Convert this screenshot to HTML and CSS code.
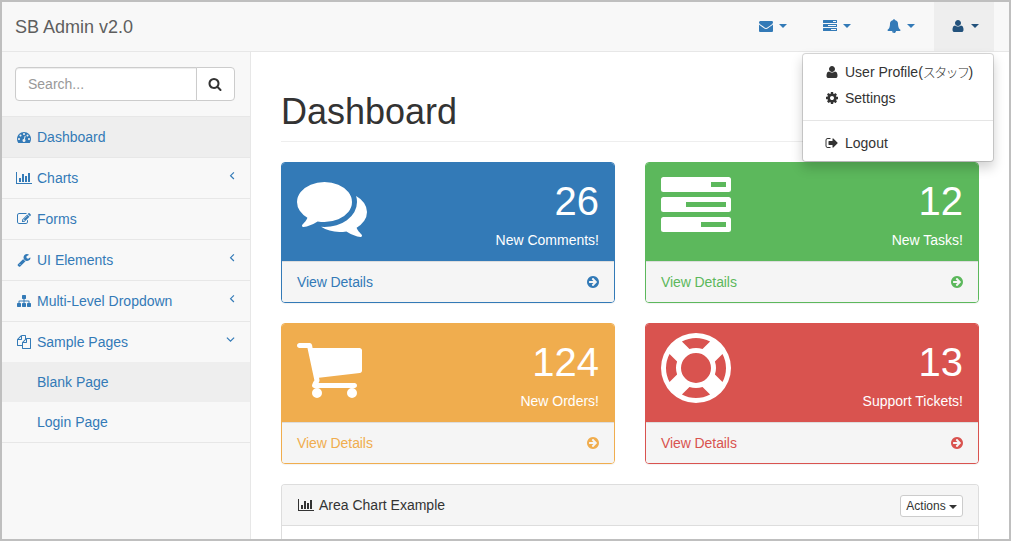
FILE: index.html
```
<!DOCTYPE html>
<html lang="en">
<head>
    <meta charset="UTF-8">
    <meta name="viewport" content="width=device-width, initial-scale=1.0">
    <title>SB Admin v2.0</title>
    <link rel="stylesheet" href="styles.css">
</head>
<body>
    <!-- icon shapes, used below with <use> -->
    <svg class="sprite">
        <symbol id="envelope" viewBox="0 0 1792 1792"><path d="M1792 710v794q0 66-47 113t-113 47h-1472q-66 0-113-47t-47-113v-794q44 49 101 87 362 246 497 345 57 42 92.5 65.5t94.5 48 110 24.5h2q51 0 110-24.5t94.5-48 92.5-65.5q170-123 498-345 57-39 100-87zm0-294q0 79-49 151t-122 123q-376 261-468 325-10 7-42.5 31t-54 38.5-52 32.5-57.5 27-50 9h-2q-23 0-50-9t-57.5-27-52-32.5-54-38.5-42.5-31q-91-64-262-182.5t-205-142.5q-62-42-117-115.5t-55-136.5q0-78 41.5-130t118.5-52h1472q65 0 112.5 47t47.5 113z"/></symbol>
        <symbol id="tasks" viewBox="0 0 1792 1792"><path fill-rule="evenodd" d="M64 128h1664q64 0 64 64v256q0 64-64 64h-1664q-64 0-64-64v-256q0-64 64-64zM1280 256v128h384v-128zM64 640h1664q64 0 64 64v256q0 64-64 64h-1664q-64 0-64-64v-256q0-64 64-64zM640 768v128h1024v-128zM64 1152h1664q64 0 64 64v256q0 64-64 64h-1664q-64 0-64-64v-256q0-64 64-64zM1024 1280v128h640v-128z"/></symbol>
        <symbol id="bell" viewBox="0 0 1792 1792"><path d="M912 1696q0-16-16-16-59 0-101.5-42.5t-42.5-101.5q0-16-16-16t-16 16q0 73 51.5 124.5t124.5 51.5q16 0 16-16zm816-288q0 52-38 90t-90 38h-448q0 106-75 181t-181 75-181-75-75-181h-448q-52 0-90-38t-38-90q50-42 91-88t85-119.5 74.5-158.5 50-206 19.5-260q0-152 117-282.5t307-158.5q-8-19-8-39 0-40 28-68t68-28 68 28 28 68q0 20-8 39 190 28 307 158.5t117 282.5q0 139 19.5 260t50 206 74.5 158.5 85 119.5 91 88z"/></symbol>
        <symbol id="user" viewBox="0 0 1792 1792"><path transform="translate(192 1536) scale(1 -1)" d="M1408 131q0 -120 -73 -189.5t-194 -69.5h-874q-121 0 -194 69.5t-73 189.5q0 53 3.5 103.5t14 109t26.5 108.5t43 97.5t62 81t85.5 53.5t111.5 20q9 0 42 -21.5t74.5 -48t108 -48t133.5 -21.5t133.5 21.5t108 48t74.5 48t42 21.5q61 0 111.5 -20t85.5 -53.5t62 -81t43 -97.5t26.5 -108.5t14 -109t3.5 -103.5zM1088 1024q0 -159 -112.5 -271.5t-271.5 -112.5t-271.5 112.5t-112.5 271.5t112.5 271.5t271.5 112.5t271.5 -112.5t112.5 -271.5z"/></symbol>
        <symbol id="cog" viewBox="0 0 1792 1792"><path d="M1152 896q0-106-75-181t-181-75-181 75-75 181 75 181 181 75 181-75 75-181zm512-109v222q0 12-8 23t-20 13l-185 28q-19 54-39 91 35 50 107 138 10 12 10 25t-9 23q-27 37-99 108t-94 71q-12 0-26-9l-138-108q-44 23-91 38-16 136-29 186-7 28-36 28h-222q-14 0-24.5-8.5t-11.5-21.5l-28-184q-49-16-90-37l-141 107q-10 9-25 9-14 0-25-11-126-114-165-168-7-10-7-23 0-12 8-23 15-21 51-66.5t54-70.5q-27-50-41-99l-183-27q-13-2-21-12.5t-8-23.5v-222q0-12 8-23t19-13l186-28q14-46 39-92-40-57-107-138-10-12-10-24 0-10 9-23 26-36 98.5-107.5t94.5-71.5q13 0 26 10l138 107q44-23 91-38 16-136 29-186 7-28 36-28h222q14 0 24.5 8.5t11.5 21.5l28 184q49 16 90 37l142-107q9-9 24-9 13 0 25 10 129 119 165 170 7 8 7 22 0 12-8 23-15 21-51 66.5t-54 70.5q26 50 41 98l183 28q13 2 21 12.5t8 23.5z"/></symbol>
        <symbol id="sign-out" viewBox="0 0 1792 1792"><path d="M704 1440q0 4 1 20t.5 26.5-3 23.5-10 19.5-20.5 6.5h-320q-119 0-203.5-84.5t-84.5-203.5v-704q0-119 84.5-203.5t203.5-84.5h320q13 0 22.5 9.5t9.5 22.5q0 4 1 20t.5 26.5-3 23.5-10 19.5-20.5 6.5h-320q-66 0-113 47t-47 113v704q0 66 47 113t113 47h312l11.5 1 11.5 3 8 5.5 7 9 2 13.5zm928-544q0 26-19 45l-544 544q-19 19-45 19t-45-19-19-45v-288h-448q-26 0-45-19t-19-45v-384q0-26 19-45t45-19h448v-288q0-26 19-45t45-19 45 19l544 544q19 19 19 45z"/></symbol>
        <symbol id="search" viewBox="0 0 1792 1792"><path d="M1216 832q0-185-131.5-316.5t-316.5-131.5-316.5 131.5-131.5 316.5 131.5 316.5 316.5 131.5 316.5-131.5 131.5-316.5zm512 832q0 52-38 90t-90 38q-54 0-90-38l-343-342q-179 124-399 124-143 0-273.5-55.5t-225-150-150-225-55.5-273.5 55.5-273.5 150-225 225-150 273.5-55.5 273.5 55.5 225 150 150 225 55.5 273.5q0 220-124 399l343 343q37 37 37 90z"/></symbol>
        <symbol id="dashboard" viewBox="0 0 1792 1792"><path d="M384 1152q0-53-37.5-90.5t-90.5-37.5-90.5 37.5-37.5 90.5 37.5 90.5 90.5 37.5 90.5-37.5 37.5-90.5zm192-448q0-53-37.5-90.5t-90.5-37.5-90.5 37.5-37.5 90.5 37.5 90.5 90.5 37.5 90.5-37.5 37.5-90.5zm428 481l101-382q6-26-7.5-48.5t-38.5-29.5-48 6.5-30 39.5l-101 382q-60 5-107 43.5t-63 98.5q-20 77 20 146t117 89 146-20 89-117q16-60-6-117t-72-91zm660-33q0-53-37.5-90.5t-90.5-37.5-90.5 37.5-37.5 90.5 37.5 90.5 90.5 37.5 90.5-37.5 37.5-90.5zm-640-640q0-53-37.5-90.5t-90.5-37.5-90.5 37.5-37.5 90.5 37.5 90.5 90.5 37.5 90.5-37.5 37.5-90.5zm448 192q0-53-37.5-90.5t-90.5-37.5-90.5 37.5-37.5 90.5 37.5 90.5 90.5 37.5 90.5-37.5 37.5-90.5zm320 448q0 261-141 483-19 29-54 29h-1402q-35 0-54-29-141-221-141-483 0-182 71-348t191-286 286-191 348-71 348 71 286 191 191 286 71 348z"/></symbol>
        <symbol id="chart" viewBox="0 -128 2048 1792"><path d="M640 768v512h-256v-512h256zm384-512v1024h-256v-1024h256zm1024 1152v128h-2048v-1536h128v1408h1920zm-640-896v768h-256v-768h256zm384-384v1152h-256v-1152h256z"/></symbol>
        <symbol id="edit" viewBox="0 0 1792 1792"><path d="M888 1184l116-116-152-152-116 116v56h96v96h56zm440-720q-16-16-33 1l-350 350q-17 17-1 33t33-1l350-350q17-17 1-33zm80 594v190q0 119-84.5 203.5t-203.5 84.5h-832q-119 0-203.5-84.5t-84.5-203.5v-832q0-119 84.5-203.5t203.5-84.5h832q63 0 117 25 15 7 18 23 3 17-9 29l-49 49q-14 14-32 8-23-6-45-6h-832q-66 0-113 47t-47 113v832q0 66 47 113t113 47h832q66 0 113-47t47-113v-126q0-13 9-22l64-64q15-15 35-7t20 29zm-96-738l288 288-672 672h-288v-288zm444 132l-92 92-288-288 92-92q28-28 68-28t68 28l152 152q28 28 28 68t-28 68z"/></symbol>
        <symbol id="wrench" viewBox="0 0 1792 1792"><path d="M448 1472q0-26-19-45t-45-19-45 19-19 45 19 45 45 19 45-19 19-45zm644-420l-682 682q-37 37-90 37-52 0-91-37l-106-108q-38-36-38-90 0-53 38-91l681-681q39 98 114.5 173.5t173.5 114.5zm634-435q0 39-23 106-47 134-164.5 217.5t-258.5 83.5q-185 0-316.5-131.5t-131.5-316.5 131.5-316.5 316.5-131.5q58 0 121.5 16.5t107.5 46.5q16 11 16 28t-16 28l-293 169v224l193 107q5-3 79-48.5t135.5-81 70.5-35.5q15 0 23.5 10t8.5 25z"/></symbol>
        <symbol id="sitemap" viewBox="0 0 1792 1792"><path d="M1792 1248v320q0 40-28 68t-68 28h-320q-40 0-68-28t-28-68v-320q0-40 28-68t68-28h96v-192h-512v192h96q40 0 68 28t28 68v320q0 40-28 68t-68 28h-320q-40 0-68-28t-28-68v-320q0-40 28-68t68-28h96v-192h-512v192h96q40 0 68 28t28 68v320q0 40-28 68t-68 28h-320q-40 0-68-28t-28-68v-320q0-40 28-68t68-28h96v-192q0-52 38-90t90-38h512v-192h-96q-40 0-68-28t-28-68v-320q0-40 28-68t68-28h320q40 0 68 28t28 68v320q0 40-28 68t-68 28h-96v192h512q52 0 90 38t38 90v192h96q40 0 68 28t28 68z"/></symbol>
        <symbol id="files" viewBox="0 0 1792 1792"><path d="M1696 384q40 0 68 28t28 68v1216q0 40-28 68t-68 28h-960q-40 0-68-28t-28-68v-288h-544q-40 0-68-28t-28-68v-672q0-40 20-88t48-76l408-408q28-28 76-48t88-20h416q40 0 68 28t28 68v328q68-40 128-40h416zm-544 213l-299 299h299v-299zm-640-384l-299 299h299v-299zm196 647l316-316v-416h-384v416q0 40-28 68t-68 28h-416v640h512v-256q0-40 20-88t48-76zm956 804v-1152h-384v416q0 40-28 68t-68 28h-416v640h896z"/></symbol>
        <symbol id="arrow-circle" viewBox="0 0 1792 1792"><path d="M1413 896q0-27-18-45l-91-91-362-362q-18-18-45-18t-45 18l-91 91q-18 18-18 45t18 45l189 189h-502q-26 0-45 19t-19 45v128q0 26 19 45t45 19h502l-189 189q-19 19-19 45t19 45l91 91q18 18 45 18t45-18l362-362 91-91q18-18 18-45zm251 0q0 209-103 385.5t-279.5 279.5-385.5 103-385.5-103-279.5-279.5-103-385.5 103-385.5 279.5-279.5 385.5-103 385.5 103 279.5 279.5 103 385.5z"/></symbol>
        <symbol id="comments" viewBox="0 0 1792 1792"><path d="M1408 768q0 139-94 257t-256.5 186.5-353.5 68.5q-86 0-176-16-124 88-278 128-36 9-86 16h-3q-11 0-20.5-8t-11.5-21q-1-3-1-6.5t.5-6.5 2-6l2.5-5t3.5-5.5 4-5 4.5-5 4-4.5q5-6 23-25t26-29.5 22.5-29 25-38.5 20.5-44q-124-72-195-177t-71-224q0-139 94-257t256.5-186.5 353.5-68.5 353.5 68.5 256.5 186.5 94 257zm384 256q0 120-71 224.5t-195 176.5q10 24 20.5 44t25 38.5 22.5 29 26 29.5 23 25q1 1 4 4.5t4.5 5 4 5 3.5 5.5l2.5 5t2 6 .5 6.5-1 6.5q-3 14-13 22t-22 7q-50-7-86-16-154-40-278-128-90 16-176 16-271 0-472-132 58 4 88 4 161 0 309-45t264-129q125-92 192-212t67-254q0-77-23-152 129 71 204 178t75 230z"/></symbol>
        <symbol id="cart" viewBox="64 0 1792 1792"><path d="M704 1536q0 52-38 90t-90 38-90-38-38-90 38-90 90-38 90 38 38 90zm896 0q0 52-38 90t-90 38-90-38-38-90 38-90 90-38 90 38 38 90zm128-1088v512q0 24-16.5 42.5t-40.5 21.5l-1044 122q13 60 13 70 0 16-24 64h920q26 0 45 19t19 45-19 45-45 19h-1024q-26 0-45-19t-19-45q0-11 8-31.5t16-36 21.5-40 15.5-29.5l-177-823h-204q-26 0-45-19t-19-45 19-45 45-19h256q16 0 28.5 6.5t19.5 15.5 13 24.5 8 26 5.5 29.5 4.5 26h1201q26 0 45 19t19 45z"/></symbol>
        <symbol id="support" viewBox="0 0 1792 1792"><path d="M896 0q182 0 348 71t286 191 191 286 71 348-71 348-191 286-286 191-348 71-348-71-286-191-191-286-71-348 71-348 191-286 286-191 348-71zm0 128q-190 0-361 90l194 194q82-28 167-28t167 28l194-194q-171-90-361-90zm-678 1129l194-194q-28-82-28-167t28-167l-194-194q-90 171-90 361t90 361zm678 407q190 0 361-90l-194-194q-82 28-167 28t-167-28l-194 194q171 90 361 90zm0-384q159 0 271.5-112.5t112.5-271.5-112.5-271.5-271.5-112.5-271.5 112.5-112.5 271.5 112.5 271.5 271.5 112.5zm484-217l194 194q90-171 90-361t-90-361l-194 194q28 82 28 167t-28 167z"/></symbol>
        <symbol id="angle-left" viewBox="0 0 6 14"><path class="line" d="M4.9 2.4L1.6 5.7L4.9 9"/></symbol>
        <symbol id="angle-down" viewBox="0 0 9 14"><path class="line" d="M0.9 3.6L4.5 7.2L8.1 3.6"/></symbol>
    </svg>

    <nav class="navbar">
        <a class="brand" href="#">SB Admin v2.0</a>
        <ul class="top-links">
            <li><a href="#"><svg class="icon"><use href="#envelope"/></svg><b class="caret"></b></a></li>
            <li><a href="#"><svg class="icon"><use href="#tasks"/></svg><b class="caret"></b></a></li>
            <li><a href="#"><svg class="icon"><use href="#bell"/></svg><b class="caret"></b></a></li>
            <li class="open">
                <a href="#"><svg class="icon"><use href="#user"/></svg><b class="caret"></b></a>
                <ul class="dropdown">
                    <li><a href="#"><svg class="icon"><use href="#user"/></svg><span>User Profile(<span class="kana">スタッフ</span>)</span></a></li>
                    <li><a href="#"><svg class="icon"><use href="#cog"/></svg>Settings</a></li>
                    <li class="divider"></li>
                    <li><a href="#"><svg class="icon"><use href="#sign-out"/></svg>Logout</a></li>
                </ul>
            </li>
        </ul>
    </nav>

    <div class="wrapper">
        <aside class="sidebar">
            <div class="search">
                <input type="text" placeholder="Search...">
                <button><svg class="icon"><use href="#search"/></svg></button>
            </div>
            <ul class="menu">
                <li><a class="active" href="#"><svg class="icon"><use href="#dashboard"/></svg>Dashboard</a></li>
                <li><a href="#"><svg class="icon icon-chart"><use href="#chart"/></svg>Charts<svg class="arrow"><use href="#angle-left"/></svg></a></li>
                <li><a href="#"><svg class="icon"><use href="#edit"/></svg>Forms</a></li>
                <li><a href="#"><svg class="icon"><use href="#wrench"/></svg>UI Elements<svg class="arrow"><use href="#angle-left"/></svg></a></li>
                <li><a href="#"><svg class="icon"><use href="#sitemap"/></svg>Multi-Level Dropdown<svg class="arrow"><use href="#angle-left"/></svg></a></li>
                <li>
                    <a href="#"><svg class="icon"><use href="#files"/></svg>Sample Pages<svg class="arrow arrow-down"><use href="#angle-down"/></svg></a>
                    <ul class="submenu">
                        <li><a class="active" href="#">Blank Page</a></li>
                        <li><a href="#">Login Page</a></li>
                    </ul>
                </li>
            </ul>
        </aside>

        <main class="page">
            <h1>Dashboard</h1>
            <div class="cards">
                <div class="card blue">
                    <div class="card-top">
                        <svg class="big-icon"><use href="#comments"/></svg>
                        <div class="count">
                            <div class="huge">26</div>
                            <div>New Comments!</div>
                        </div>
                    </div>
                    <a class="card-footer" href="#">View Details<svg class="icon"><use href="#arrow-circle"/></svg></a>
                </div>
                <div class="card green">
                    <div class="card-top">
                        <svg class="big-icon"><use href="#tasks"/></svg>
                        <div class="count">
                            <div class="huge">12</div>
                            <div>New Tasks!</div>
                        </div>
                    </div>
                    <a class="card-footer" href="#">View Details<svg class="icon"><use href="#arrow-circle"/></svg></a>
                </div>
                <div class="card yellow">
                    <div class="card-top">
                        <svg class="big-icon"><use href="#cart"/></svg>
                        <div class="count">
                            <div class="huge">124</div>
                            <div>New Orders!</div>
                        </div>
                    </div>
                    <a class="card-footer" href="#">View Details<svg class="icon"><use href="#arrow-circle"/></svg></a>
                </div>
                <div class="card red">
                    <div class="card-top">
                        <svg class="big-icon"><use href="#support"/></svg>
                        <div class="count">
                            <div class="huge">13</div>
                            <div>Support Tickets!</div>
                        </div>
                    </div>
                    <a class="card-footer" href="#">View Details<svg class="icon"><use href="#arrow-circle"/></svg></a>
                </div>
            </div>
            <section class="panel">
                <div class="panel-heading">
                    <svg class="icon icon-chart"><use href="#chart"/></svg>Area Chart Example
                    <button class="actions">Actions <b class="caret"></b></button>
                </div>
            </section>
        </main>
    </div>
</body>
</html>
```
FILE: styles.css
```
* {
    box-sizing: border-box;
}
body {
    margin: 0;
    height: 541px;
    border: 2px solid #bfbfbf;
    overflow: hidden;
    display: flex;
    flex-direction: column;
    background-color: #fff;
    color: #333;
    font-family: "Liberation Sans", Arial, sans-serif;
    font-size: 14px;
    line-height: 20px;
}
a {
    color: #337ab7;
    text-decoration: none;
}
ul {
    margin: 0;
    padding: 0;
    list-style: none;
}

/* Icons */
.sprite {
    display: none;
}
.icon {
    width: 14px;
    height: 14px;
    margin: 0 6px 0 2px;
    flex-shrink: 0;
    fill: currentColor;
}
.icon-chart {
    width: 16px;
    margin: 0 5px 0 1px;
}
.line {
    fill: none;
    stroke: currentColor;
    stroke-width: 1.2;
}
.caret {
    display: inline-block;
    border-top: 4px solid;
    border-left: 4px solid transparent;
    border-right: 4px solid transparent;
}

/* Top bar */
.navbar {
    flex: 0 0 50px;
    display: flex;
    justify-content: space-between;
    background-color: #f8f8f8;
    border-bottom: 1px solid #e7e7e7;
}
.brand {
    padding: 15px 13px 14px;
    font-size: 18px;
    color: #5e5e5e;
}
.top-links {
    display: flex;
    gap: 4px;
    margin-right: 15px;
}
.top-links > li {
    position: relative;
}
.top-links > li > a {
    display: flex;
    align-items: center;
    height: 49px;
    padding: 0 15px 1px;
}
.open > a {
    background-color: #eee;
    color: #23527c;
}

/* User menu, hangs below the top bar */
.dropdown {
    position: absolute;
    top: 51px;
    right: 0;
    z-index: 10;
    width: 192px;
    padding: 5px 0;
    background-color: #fff;
    border: 1px solid rgba(0, 0, 0, 0.15);
    border-radius: 4px;
    background-clip: padding-box;
    box-shadow: 0 6px 12px rgba(0, 0, 0, 0.175);
}
.dropdown li > a {
    display: flex;
    align-items: center;
    height: 26px;
    padding: 3px 20px;
    color: #333;
    white-space: nowrap;
}
.divider {
    height: 1px;
    margin: 9px 0;
    background-color: #e5e5e5;
}
.kana {
    font-family: "Noto Sans CJK JP", sans-serif;
    font-size: 13px;
    font-weight: 300;
    line-height: 1;
    letter-spacing: -1.6px;
}

/* Sidebar */
.wrapper {
    flex: 1;
    display: flex;
    min-height: 0;
}
.sidebar {
    flex: 0 0 249px;
    background-color: #f8f8f8;
    border-right: 1px solid #e7e7e7;
}
.search {
    display: flex;
    padding: 15px 15px 15px 13px;
    border-bottom: 1px solid #e7e7e7;
}
.search input {
    width: 182px;
    height: 34px;
    padding: 6px 12px;
    border: 1px solid #ccc;
    border-radius: 4px 0 0 4px;
    box-shadow: inset 0 1px 1px rgba(0, 0, 0, 0.075);
    font: inherit;
}
.search input::placeholder {
    color: #999;
}
.search button {
    width: 39px;
    margin-left: -1px;
    padding: 0 1px 0 0;
    display: flex;
    align-items: center;
    justify-content: center;
    border: 1px solid #ccc;
    border-radius: 0 4px 4px 0;
    background-color: #fff;
    color: #333;
}
.search .icon {
    margin: 0;
}
.menu > li {
    border-bottom: 1px solid #e7e7e7;
}
.menu a {
    display: flex;
    align-items: center;
    height: 40px;
    padding: 0 15px 0 13px;
}
.menu a.active {
    background-color: #eee;
}
.menu .submenu a {
    padding-left: 35px;
}
.arrow {
    width: 6px;
    height: 14px;
    margin: -2px 0 0 auto;
}
.arrow-down {
    width: 9px;
}

/* Page */
.page {
    flex: 1;
    display: flex;
    flex-direction: column;
    padding: 0 30px;
}
h1 {
    margin: 40px 0 20px;
    padding-bottom: 9px;
    border-bottom: 1px solid #eee;
    font-size: 36px;
    font-weight: 500;
    line-height: 40px;
}
.cards {
    display: grid;
    grid-template-columns: 1fr 1fr;
    gap: 20px 30px;
}
.card {
    border: 1px solid;
    border-radius: 4px;
    box-shadow: 0 1px 1px rgba(0, 0, 0, 0.05);
    overflow: hidden;
}
.blue {
    color: #337ab7;
}
.green {
    color: #5cb85c;
}
.yellow {
    color: #f0ad4e;
}
.red {
    color: #d9534f;
}
.card-top {
    display: flex;
    justify-content: space-between;
    height: 98px;
    padding: 10px 15px;
    background-color: currentColor;
}
.big-icon {
    width: 70px;
    height: 70px;
    margin-top: -1px;
    fill: #fff;
}
.count {
    color: #fff;
    text-align: right;
}
.huge {
    font-size: 40px;
    line-height: 57px;
}
.card-footer {
    display: flex;
    align-items: center;
    justify-content: space-between;
    padding: 10px 15px;
    border-top: 1px solid #ddd;
    background-color: #f5f5f5;
    color: inherit;
    letter-spacing: -0.08px;
}
.card-footer .icon {
    margin: 0 -1px 0 0;
}

/* Chart panel, runs down to the window edge */
.panel {
    flex: 1;
    margin-top: 20px;
    border: 1px solid #ddd;
    border-bottom: none;
    border-radius: 4px 4px 0 0;
}
.panel-heading {
    display: flex;
    align-items: center;
    height: 41px;
    padding: 0 15px;
    border-bottom: 1px solid #ddd;
    border-radius: 3px 3px 0 0;
    background-color: #f5f5f5;
}
.actions {
    height: 22px;
    margin: 2px 0 0 auto;
    padding: 0 5px;
    border: 1px solid #ccc;
    border-radius: 3px;
    background-color: #fff;
    color: #333;
    font-family: inherit;
    font-size: 12px;
    line-height: 18px;
}
.actions .caret {
    vertical-align: middle;
}
```
